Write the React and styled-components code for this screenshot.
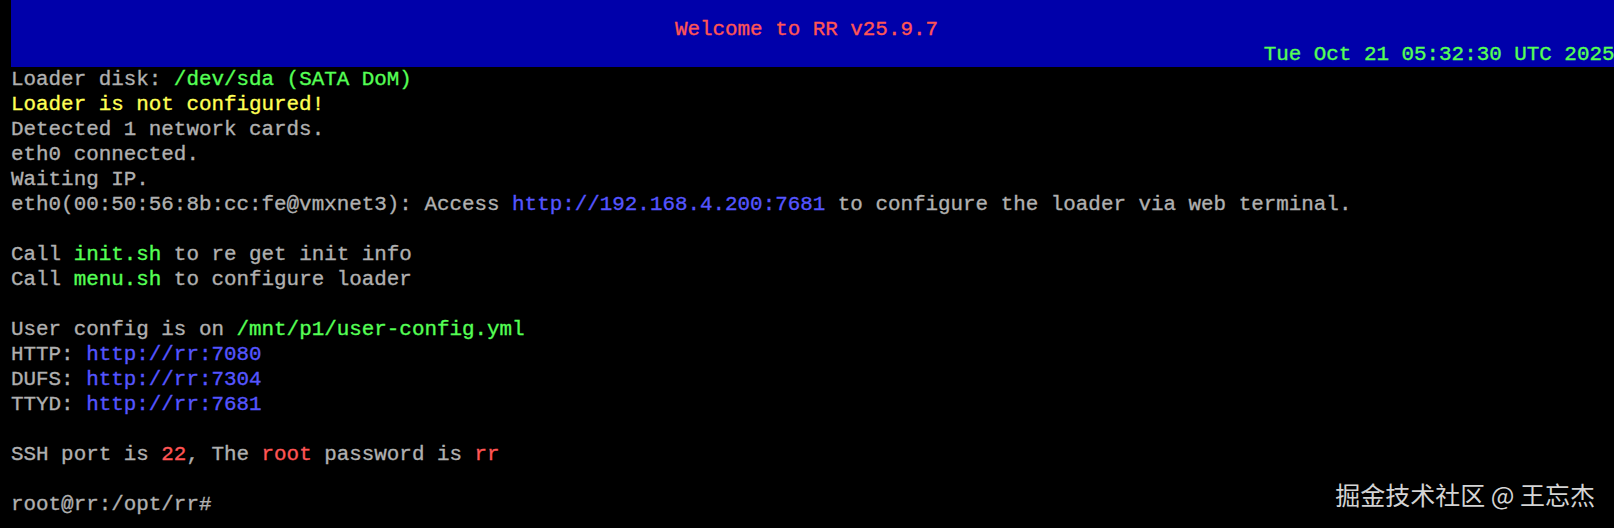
import styled, { createGlobalStyle } from "styled-components"

const GlobalStyle = createGlobalStyle`
  html, body {
    margin: 0;
    padding: 0;
    background: #000;
  }
`

const COLORS = {
  gray: '#b0b0b0',
  green: '#55ff55',
  yellow: '#ffff55',
  blue: '#5555ff',
  red: '#ff5555',
}

const Screen = styled.div`
  position: relative;
  width: 1614px;
  height: 528px;
  overflow: hidden;
  background: #000;
  padding-left: 11px;
  box-sizing: border-box;
  font-family: "Liberation Mono", "DejaVu Sans Mono", monospace;
  font-size: 20.88px;
  line-height: 25px;
  color: ${COLORS.gray};
  -webkit-text-stroke: 0.35px currentColor;
`

const Header = styled.header`
  background: #0000aa;
  padding-top: 17px;
  height: 67px;
  box-sizing: border-box;
`

const HeaderRow = styled.div`
  height: 25px;
  white-space: pre;
  padding-left: ${props => props.$col}ch;
  color: ${props => props.$color};
`

const Body = styled.main`
  display: flex;
  flex-direction: column;
`

const Line = styled.div`
  height: 25px;
  white-space: pre;
`

const Hl = styled.span`
  color: ${props => COLORS[props.$c] || COLORS.gray};
`

const Watermark = styled.div`
  position: absolute;
  right: 19px;
  top: 477px;
  font-family: "Noto Sans CJK SC", sans-serif;
  font-size: 25px;
  line-height: 34px;
  color: #d4d4d4;
  white-space: pre;
  -webkit-text-stroke: 0;
`

// each line is a list of [text, color]
const lines = [
  [['Loader disk: '], ['/dev/sda (SATA DoM)', 'green']],
  [['Loader is not configured!', 'yellow']],
  [['Detected 1 network cards.']],
  [['eth0 connected.']],
  [['Waiting IP.']],
  [['eth0(00:50:56:8b:cc:fe@vmxnet3): Access '], ['http://192.168.4.200:7681', 'blue'], [' to configure the loader via web terminal.']],
  [],
  [['Call '], ['init.sh', 'green'], [' to re get init info']],
  [['Call '], ['menu.sh', 'green'], [' to configure loader']],
  [],
  [['User config is on '], ['/mnt/p1/user-config.yml', 'green']],
  [['HTTP: '], ['http://rr:7080', 'blue']],
  [['DUFS: '], ['http://rr:7304', 'blue']],
  [['TTYD: '], ['http://rr:7681', 'blue']],
  [],
  [['SSH port is '], ['22', 'red'], [', The '], ['root', 'red'], [' password is '], ['rr', 'red']],
  [],
  [['root@rr:/opt/rr#']],
]

export default function App() {
  return (
    <>
      <GlobalStyle />
      <Screen>
        <Header>
          <HeaderRow $col={53} $color={COLORS.red}>Welcome to RR v25.9.7</HeaderRow>
          <HeaderRow $col={100} $color={COLORS.green}>Tue Oct 21 05:32:30 UTC 2025</HeaderRow>
        </Header>
        <Body>
          {lines.map((parts, i) => (
            <Line key={i}>
              {parts.map(([text, c], j) => <Hl key={j} $c={c}>{text}</Hl>)}
            </Line>
          ))}
        </Body>
        <Watermark>掘金技术社区 @ 王忘杰</Watermark>
      </Screen>
    </>
  )
}
